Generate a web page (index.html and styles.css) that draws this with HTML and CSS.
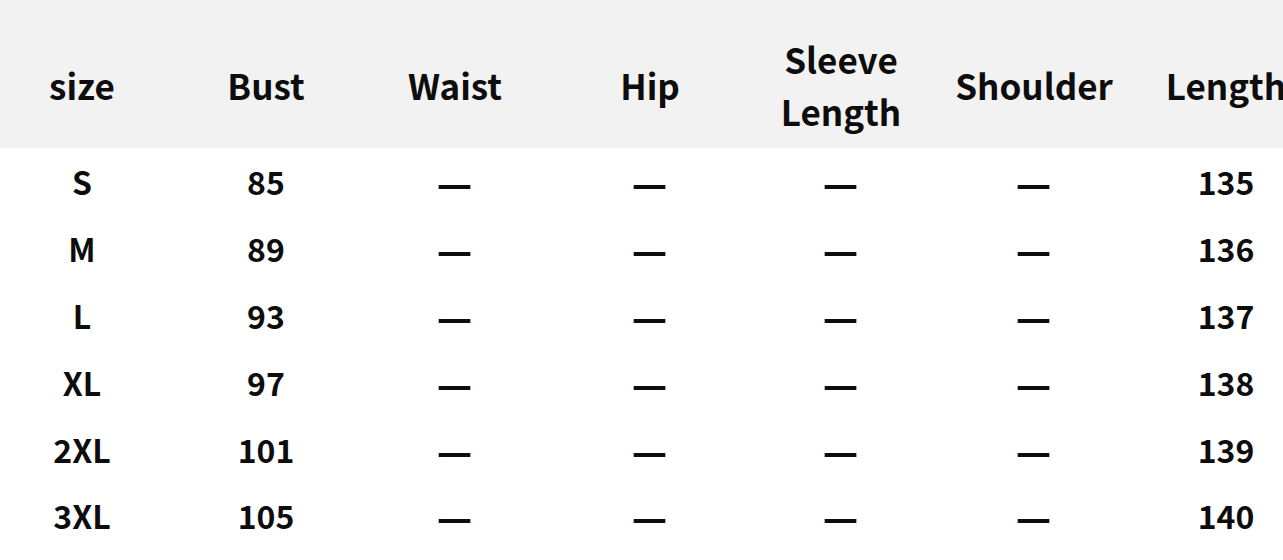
FILE: index.html
```html
<!DOCTYPE html>
<html>
<head>
<meta charset="utf-8">
<link rel="stylesheet" href="styles.css">
</head>
<body>
<div class="chart">
  <div class="row head">
    <div class="cell">size</div>
    <div class="cell">Bust</div>
    <div class="cell">Waist</div>
    <div class="cell">Hip</div>
    <div class="cell">Sleeve<br>Length</div>
    <div class="cell">Shoulder</div>
    <div class="cell">Length</div>
  </div>
  <div class="row"><div class="cell">S</div><div class="cell">85</div><div class="cell"><span class="dash">—</span></div><div class="cell"><span class="dash">—</span></div><div class="cell"><span class="dash">—</span></div><div class="cell"><span class="dash">—</span></div><div class="cell">135</div></div>
  <div class="row"><div class="cell">M</div><div class="cell">89</div><div class="cell"><span class="dash">—</span></div><div class="cell"><span class="dash">—</span></div><div class="cell"><span class="dash">—</span></div><div class="cell"><span class="dash">—</span></div><div class="cell">136</div></div>
  <div class="row"><div class="cell">L</div><div class="cell">93</div><div class="cell"><span class="dash">—</span></div><div class="cell"><span class="dash">—</span></div><div class="cell"><span class="dash">—</span></div><div class="cell"><span class="dash">—</span></div><div class="cell">137</div></div>
  <div class="row"><div class="cell">XL</div><div class="cell">97</div><div class="cell"><span class="dash">—</span></div><div class="cell"><span class="dash">—</span></div><div class="cell"><span class="dash">—</span></div><div class="cell"><span class="dash">—</span></div><div class="cell">138</div></div>
  <div class="row"><div class="cell">2XL</div><div class="cell">101</div><div class="cell"><span class="dash">—</span></div><div class="cell"><span class="dash">—</span></div><div class="cell"><span class="dash">—</span></div><div class="cell"><span class="dash">—</span></div><div class="cell">139</div></div>
  <div class="row"><div class="cell">3XL</div><div class="cell">105</div><div class="cell"><span class="dash">—</span></div><div class="cell"><span class="dash">—</span></div><div class="cell"><span class="dash">—</span></div><div class="cell"><span class="dash">—</span></div><div class="cell">140</div></div>
</div>
</body>
</html>
```
FILE: styles.css
```css
html, body {
  margin: 0;
  padding: 0;
  background: #ffffff;
  overflow: hidden;
}
.chart {
  width: 1308px;
  font-family: "Noto Sans CJK SC", "Noto Sans", sans-serif;
  font-weight: 700;
  color: #0d0d0d;
}
.row {
  display: grid;
  grid-template-columns: 164px 204px 174px 216px 166px 220px 164px;
  height: 66.8px;
  align-items: center;
  font-size: 32px;
  line-height: 1;
}
.row.head {
  height: 148px;
  box-sizing: border-box;
  padding-top: 22px;
  background: #f2f2f2;
  font-size: 35px;
  line-height: 52px;
}
.cell {
  text-align: center;
  white-space: nowrap;
}
.dash {
  display: inline-block;
  transform: scale(1.22, 1.3);
}
```
